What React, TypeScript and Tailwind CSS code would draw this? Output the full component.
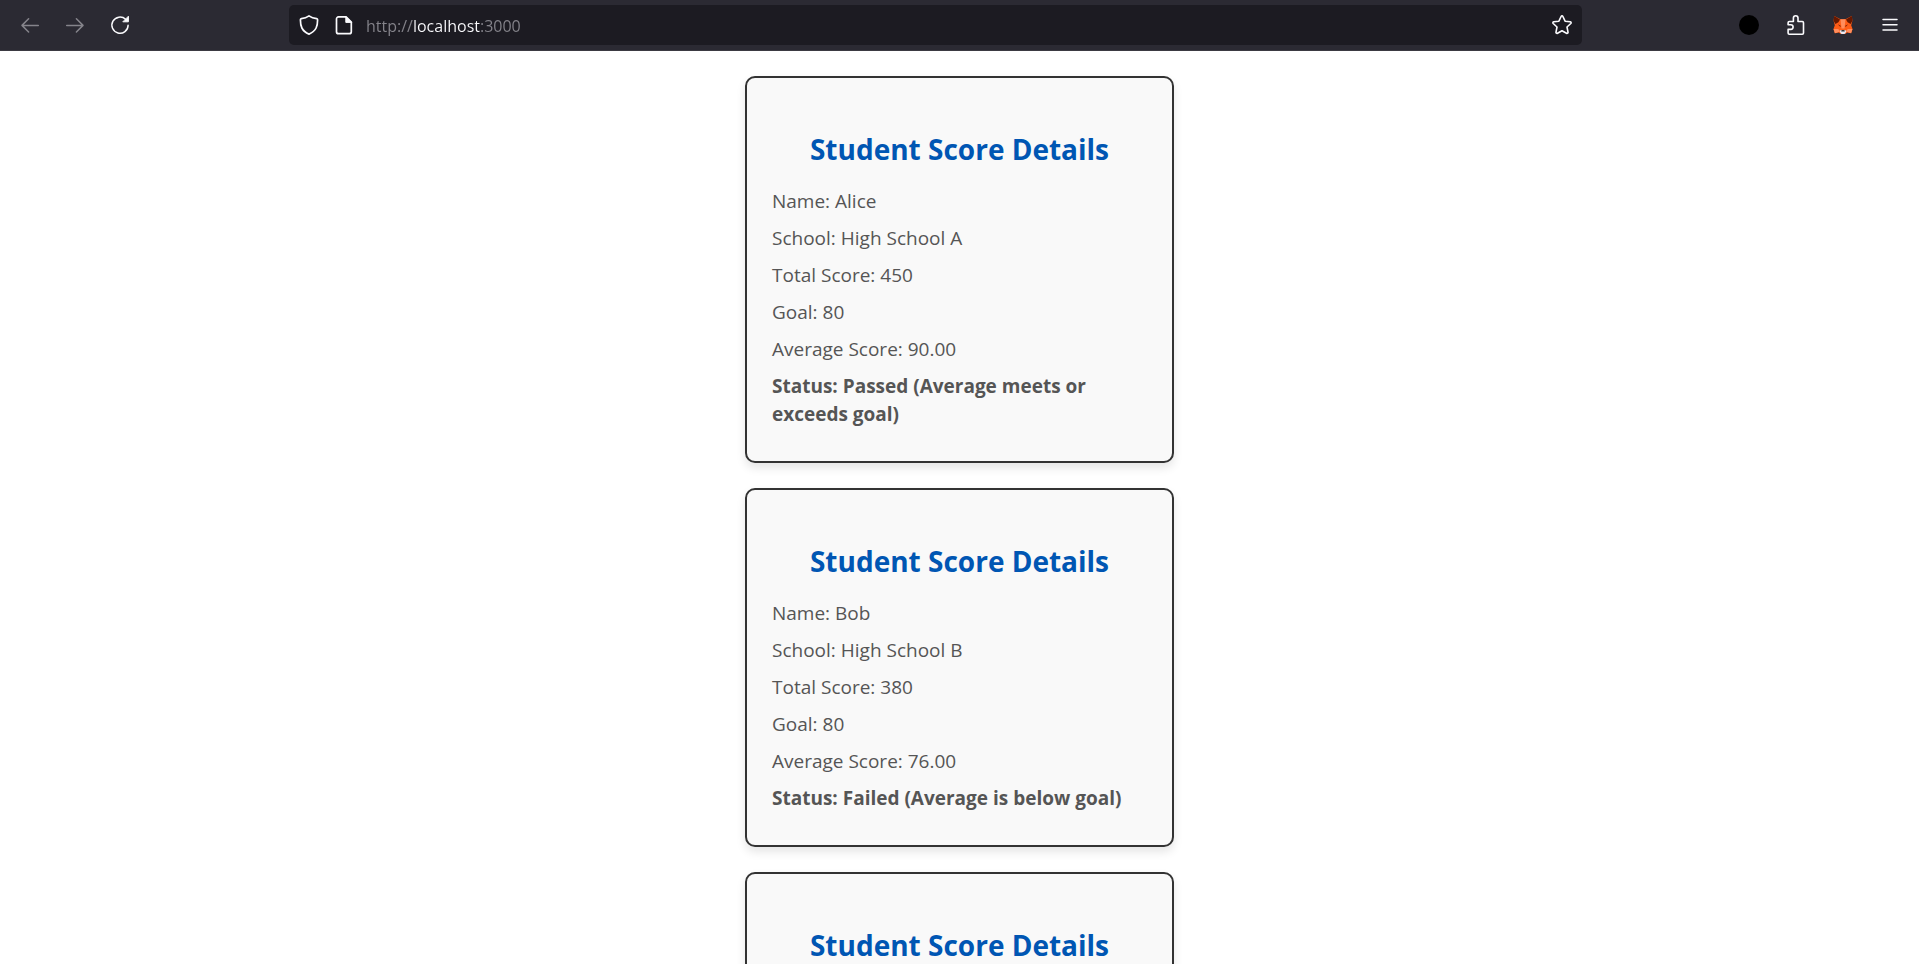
import type { ReactNode } from "react";

type Student = {
  name: string;
  school: string;
  total: number;
  goal: number;
};

const SUBJECTS = 5;

const students: Student[] = [
  { name: "Alice", school: "High School A", total: 450, goal: 80 },
  { name: "Bob", school: "High School B", total: 380, goal: 80 },
  { name: "Charlie", school: "High School C", total: 420, goal: 80 },
];

function StudentCard({ name, school, total, goal }: Student) {
  const average = total / SUBJECTS;
  const status =
    average >= goal
      ? "Passed (Average meets or exceeds goal)"
      : "Failed (Average is below goal)";
  return (
    <article className="w-full max-w-[429px] shrink-0 rounded-[10px] border-2 border-[#333333] bg-[#f9f9f9] px-[25px] pt-[51px] pb-[33px] shadow-[0_5px_10px_rgba(0,0,0,0.1)]">
      <h2 className="mb-[18px] text-center text-[28px] leading-10 font-bold text-[#0056b3]">
        Student Score Details
      </h2>
      <div className="flex flex-col gap-[9px] text-[19px] leading-7 text-[#555555]">
        <p>{`Name: ${name}`}</p>
        <p>{`School: ${school}`}</p>
        <p>{`Total Score: ${total}`}</p>
        <p>{`Goal: ${goal}`}</p>
        <p>{`Average Score: ${average.toFixed(2)}`}</p>
        <p className="font-bold">{`Status: ${status}`}</p>
      </div>
    </article>
  );
}

function ToolButton({ label, disabled, children }: { label: string; disabled?: boolean; children: ReactNode }) {
  return (
    <button
      type="button"
      aria-label={label}
      disabled={disabled}
      className="flex size-5 shrink-0 items-center justify-center text-[#fbfbfe] disabled:text-[#85848b]"
    >
      {children}
    </button>
  );
}

const line = {
  width: 20,
  height: 20,
  viewBox: "0 0 20 20",
  fill: "none",
  stroke: "currentColor",
  strokeWidth: 1.5,
  strokeLinecap: "round",
  strokeLinejoin: "round",
} as const;

function BackIcon() {
  return (
    <svg {...line}>
      <path d="M18.3 10.400H2.200M8.600 3.800 2 10.400l6.600 6.600" />
    </svg>
  );
}

function ForwardIcon() {
  return (
    <svg {...line}>
      <path d="M1.700 10.400h16.100M11.400 3.800 18 10.400l-6.600 6.600" />
    </svg>
  );
}

function ReloadIcon() {
  return (
    <svg {...line}>
      <path d="M18.100 10.200A8.100 8.100 0 1 1 15.600 4.300" />
      <path d="M18.400 1.600v5.200h-5.200z" fill="currentColor" strokeWidth="1" />
    </svg>
  );
}

function ShieldIcon() {
  return (
    <svg {...line} strokeWidth={1.7}>
      <path d="M10 .9c2.100 1.500 5 2.500 7.600 2.800.6.1 1 .5 1 1.100 0 3-.3 5.700-1.500 8.200-1.300 2.600-3.800 4.800-7.100 6.100-3.300-1.300-5.800-3.500-7.100-6.100C1.700 10.500 1.400 7.800 1.400 4.800c0-.6.4-1 1-1.100C5 3.400 7.900 2.400 10 .9z" />
    </svg>
  );
}

function PageIcon() {
  return (
    <svg {...line} strokeWidth={1.7}>
      <path d="M4.500 1.900h7.600l5.200 5.200v9.600a2 2 0 0 1-2 2H4.500a2 2 0 0 1-2-2V3.900a2 2 0 0 1 2-2z" />
      <path d="M11.800 1.900v5.500h5.500z" fill="currentColor" strokeWidth="1" />
    </svg>
  );
}

function StarIcon() {
  return (
    <svg {...line} strokeWidth={1.6}>
      <path d="M9.100 1.500c.4-.8 1.400-.8 1.800 0l2.200 4.700 5.100.6c.9.1 1.200 1.100.6 1.700l-3.800 3.500 1 5.100c.2.900-.7 1.500-1.500 1.100L10 15.700l-4.500 2.500c-.8.4-1.700-.2-1.500-1.100l1-5.100-3.800-3.500c-.6-.6-.3-1.600.6-1.700l5.100-.6z" />
    </svg>
  );
}

function PuzzleIcon() {
  return (
    <svg {...line} strokeWidth={1.6}>
      <path d="M2.100 9.800V7.700c0-.7.500-1.200 1.200-1.200h4.100V3.100a2.300 2.300 0 0 1 4.600 0v3.400h4.300c.7 0 1.200.5 1.200 1.200v10.300c0 .7-.5 1.200-1.200 1.200H3.300c-.7 0-1.200-.5-1.200-1.200v-3.600h2.700a2.300 2.300 0 0 0 0-4.600z" />
    </svg>
  );
}

function FoxIcon() {
  return (
    <svg width="20" height="20" viewBox="0 0 20 20">
      <path d="M1.200 1 7.500 4.300h5L18.800 1l.6 4.800-1.200 4.400 1.400 4-1.500 4-3.900-.6-2 1.400H7.800l-2-1.400-3.900.6-1.500-4 1.400-4L.6 5.800z" fill="#ff5c16" />
      <path d="M1.200 1 7 4.400 5.400 7.300 2.400 9 .6 5.800zM18.800 1 13 4.400l1.600 2.900 3 1.700 1.800-3.200z" fill="#661800" />
      <path d="M7.500 4.300h5l-1 9.200h-3z" fill="#ff8d5d" />
      <path d="M.6 14h4.800l1.300 2.800-4.800 1.400zM19.400 14h-4.800l-1.300 2.800 4.800 1.400z" fill="#ff8d5d" />
      <path d="m4.800 9.300 3.200 1.600-.8.900zM15.200 9.300 12 10.900l.8.900z" fill="#661800" />
      <path d="m6.500 15.700 2-.6h3l2 .6-1 2.200-1.200 1.100H8.700l-1.200-1.100z" fill="#e7ebf6" />
      <path d="M8.600 14.900h2.800l.4 1.500H8.200z" fill="#393939" />
    </svg>
  );
}

function MenuIcon() {
  return (
    <svg {...line}>
      <path d="M3 4.500h14M3 9.700h14M3 14.900h14" />
    </svg>
  );
}

function BrowserBar() {
  return (
    <header className="flex shrink-0 items-center border-b border-[#3b3a42] bg-[#2b2a33] py-[5px] pr-[19px] pl-5">
      <nav aria-label="History" className="flex w-[269px] shrink-0 gap-[25px]">
        <ToolButton label="Back" disabled>
          <BackIcon />
        </ToolButton>
        <ToolButton label="Forward" disabled>
          <ForwardIcon />
        </ToolButton>
        <ToolButton label="Reload">
          <ReloadIcon />
        </ToolButton>
      </nav>
      <div className="flex h-10 min-w-0 flex-1 items-center rounded-[5px] bg-[#1c1b22] px-2.5">
        <ToolButton label="Tracking protection">
          <ShieldIcon />
        </ToolButton>
        <div className="ml-[15px] flex">
          <ToolButton label="Site information">
            <PageIcon />
          </ToolButton>
        </div>
        <input
          type="text"
          aria-label="Address"
          defaultValue="http://localhost:3000"
          spellCheck={false}
          className="ml-3 h-8 min-w-0 flex-1 bg-[linear-gradient(90deg,#85848b_47px,#fbfbfe_47px,#fbfbfe_115px,#85848b_115px)] bg-clip-text pt-0.5 text-base text-transparent caret-white outline-none"
        />
        <ToolButton label="Bookmark this page">
          <StarIcon />
        </ToolButton>
      </div>
      <div className="ml-[157px] flex shrink-0 gap-[27px]">
        <ToolButton label="Account">
          <span className="size-5 rounded-full bg-black" />
        </ToolButton>
        <ToolButton label="Extensions">
          <PuzzleIcon />
        </ToolButton>
        <ToolButton label="Wallet">
          <FoxIcon />
        </ToolButton>
        <ToolButton label="Open menu">
          <MenuIcon />
        </ToolButton>
      </div>
    </header>
  );
}

export default function App() {
  return (
    <div className="flex h-screen flex-col bg-white font-['Open_Sans','Noto_Sans',sans-serif]">
      <BrowserBar />
      <main className="flex min-h-0 flex-1 flex-col items-center gap-[25px] overflow-y-auto py-[25px] [scrollbar-width:none]">
        {students.map((student) => (
          <StudentCard key={student.name} {...student} />
        ))}
      </main>
    </div>
  );
}
